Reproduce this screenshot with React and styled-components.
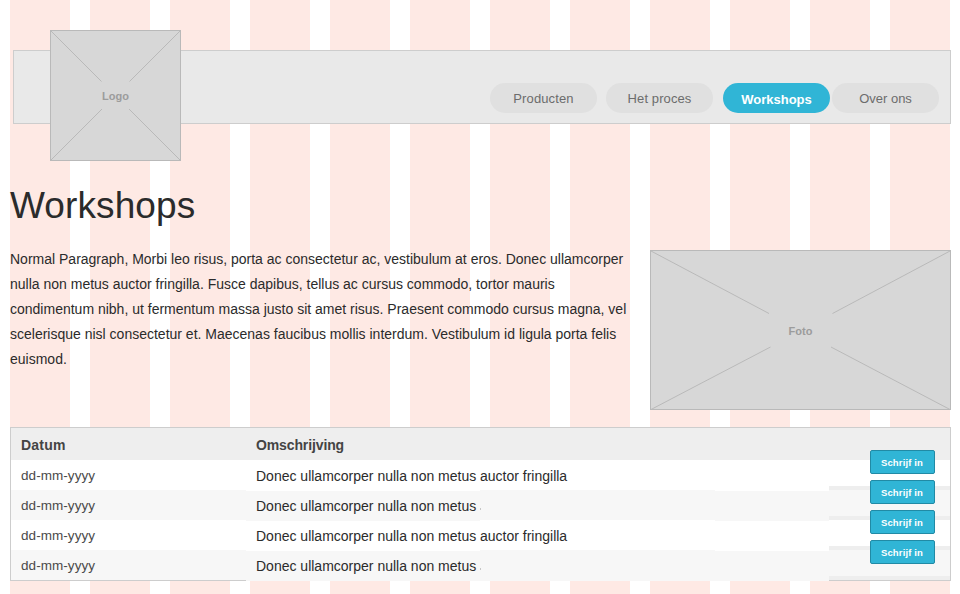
import React from "react";
import styled, { createGlobalStyle } from "styled-components";

const GlobalStyle = createGlobalStyle`
  *, *::before, *::after { box-sizing: border-box; }
  body { margin: 0; background: #fff; }
`;

const Page = styled.div`
  width: 960px;
  height: 594px;
  overflow: hidden;
  padding: 50px 9px 0 10px;
  font-family: "Liberation Sans", Arial, sans-serif;
  color: #2b2b2b;
  background: linear-gradient(90deg, #fee9e4 60px, #fff 60px) 10px 0 / 80px 100%;
`;

const Header = styled.header`
  display: flex;
  justify-content: space-between;
  height: 74px;
  margin-left: 3px;
  padding: 0 11px 0 36px;
  background: #e9e9e9;
  border: 1px solid #cdcdcd;
`;

const PlaceholderBox = styled.div`
  display: grid;
  flex: none;
  width: ${(p) => p.$width}px;
  height: ${(p) => p.$height}px;
  margin-top: ${(p) => p.$top}px;
  background: #d7d7d7;

  > * { grid-area: 1 / 1; }
`;

const Cross = styled.svg`
  display: block;
  stroke: #b9b9b9;
  fill: none;
`;

const PlaceholderLabel = styled.span`
  place-self: center;
  padding-top: 1px;
  font-size: 11px;
  line-height: 14px;
  font-weight: bold;
  letter-spacing: ${(p) => p.$tracking}px;
  color: #9c9c9c;
`;

const Nav = styled.nav`
  display: flex;
  padding-top: 32px;
`;

const Pill = styled.a`
  width: 107px;
  height: 30px;
  margin-left: ${(p) => p.$gap}px;
  border-radius: 15px;
  text-align: center;
  font-size: 13px;
  line-height: ${(p) => (p.$active ? 33 : 31)}px;
  letter-spacing: ${(p) => p.$tracking}px;
  font-weight: ${(p) => (p.$active ? "bold" : "normal")};
  color: ${(p) => (p.$active ? "#fff" : "#6c6c6c")};
  background: ${(p) => (p.$active ? "#30b5d6" : "#e0e0e0")};
`;

const Title = styled.h1`
  margin: 61px 0 0;
  height: 62px;
  font-size: 37px;
  line-height: 42px;
  font-weight: normal;
  letter-spacing: 0.1px;
`;

const Intro = styled.section`
  display: flex;
  justify-content: space-between;
  height: 180px;
`;

const Paragraph = styled.p`
  margin: 0;
  font-size: 14px;
  line-height: 25px;
  white-space: nowrap;
`;

const Line = styled.span`
  display: block;
`;

const Table = styled.section`
  height: 154px;
  border: 1px solid #cdcdcd;
  background: #fff;
`;

const TableHead = styled.div`
  display: grid;
  grid-template-columns: 235px 1fr;
  height: 32px;
  padding-left: 10px;
  background: #eee;
  color: #444;
  font-size: 14px;
  line-height: 34px;
  font-weight: bold;
`;

const HeadCell = styled.span`
  letter-spacing: ${(p) => p.$tracking}px;
`;

const Row = styled.div`
  display: grid;
  grid-template-columns: 235px 234px 235px 114px 1fr;
  grid-template-rows: 30px;
  height: 30px;

  --fill: ${(p) => (p.$shaded ? "#f7f7f7" : "#fff")};
`;

const DateCell = styled.div`
  padding-left: 10px;
  background: var(--fill);
  color: #4a4a4a;
  font-size: 13.5px;
  line-height: 31px;
  letter-spacing: 0.06px;
`;

const TextCell = styled.div`
  height: 30px;
  margin-top: 1px;
  padding-left: 10px;
  background: var(--fill);
  font-size: 14px;
  line-height: 31px;
  white-space: nowrap;
`;

const WideCell = styled.div`
  height: ${(p) => (p.$shaded ? 31 : 30)}px;
  background: var(--fill);
  font-size: 14px;
  line-height: 33px;
`;

const ClippedMark = styled.i`
  display: block;
  width: 1px;
  height: 2px;
  margin-top: 18px;
  background: #c6c6c6;
`;

const SpacerCell = styled(TextCell)`
  padding: 0;
`;

const ActionCell = styled.div`
  height: 30px;
  padding-left: 41px;
  background: var(--fill);
  border-bottom: 4px solid #eee;
`;

const SignUpButton = styled.button`
  display: block;
  width: 65px;
  height: 24px;
  margin: -10px 0 0;
  padding: 0 1px 0 0;
  border: 1px solid #218aa5;
  border-radius: 2px;
  background: #30b5d6;
  color: #fff;
  font-family: inherit;
  font-size: 9.5px;
  font-weight: bold;
  line-height: 23px;
  letter-spacing: 0.14px;
`;

const navItems = [
  { label: "Producten", gap: 0, tracking: 0.12 },
  { label: "Het proces", gap: 9, tracking: 0.1 },
  { label: "Workshops", gap: 10, tracking: 0, active: true },
  { label: "Over ons", gap: 2, tracking: 0 },
];

const introLines = [
  "Normal Paragraph, Morbi leo risus, porta ac consectetur ac, vestibulum at eros. Donec ullamcorper",
  "nulla non metus auctor fringilla. Fusce dapibus, tellus ac cursus commodo, tortor mauris",
  "condimentum nibh, ut fermentum massa justo sit amet risus. Praesent commodo cursus magna, vel",
  "scelerisque nisl consectetur et. Maecenas faucibus mollis interdum. Vestibulum id ligula porta felis",
  "euismod.",
];

const workshops = [
  { shaded: false, rest: "auctor fringilla" },
  { shaded: true, rest: "" },
  { shaded: false, rest: "auctor fringilla" },
  { shaded: true, rest: "" },
];

function Placeholder({ width, height, top, label, tracking, paths }) {
  return (
    <PlaceholderBox $width={width} $height={height} $top={top}>
      <Cross width={width} height={height}>
        <rect x="0.5" y="0.5" width={width - 1} height={height - 1} />
        <path d={paths} />
      </Cross>
      <PlaceholderLabel $tracking={tracking}>{label}</PlaceholderLabel>
    </PlaceholderBox>
  );
}

export default function App() {
  return (
    <>
      <GlobalStyle />
      <Page>
        <Header>
          <Placeholder
            width={131}
            height={131}
            top={-21}
            label="Logo"
            tracking={0}
            paths="M1 1L51.5 51.5M130 1L79.5 51.5M1 130L52 79M130 130L79 79"
          />
          <Nav>
            {navItems.map((item) => (
              <Pill key={item.label} $gap={item.gap} $tracking={item.tracking} $active={item.active}>
                {item.label}
              </Pill>
            ))}
          </Nav>
        </Header>
        <Title>Workshops</Title>
        <Intro>
          <Paragraph>
            {introLines.map((text) => (
              <Line key={text}>{text}</Line>
            ))}
          </Paragraph>
          <Placeholder
            width={301}
            height={160}
            top={3}
            label="Foto"
            tracking={0}
            paths="M1 1L119 63.5M300 1L182.5 63.5M1 159.5L120.5 97M300 159.5L181 97"
          />
        </Intro>
        <Table>
          <TableHead>
            <HeadCell $tracking={0.2}>Datum</HeadCell>
            <HeadCell $tracking={-0.12}>Omschrijving</HeadCell>
          </TableHead>
          {workshops.map((row, i) => (
            <Row key={i} $shaded={row.shaded}>
              <DateCell>dd-mm-yyyy</DateCell>
              <TextCell>Donec ullamcorper nulla non metus</TextCell>
              <WideCell $shaded={row.shaded}>{row.rest || <ClippedMark />}</WideCell>
              <SpacerCell />
              <ActionCell>
                <SignUpButton>Schrijf in</SignUpButton>
              </ActionCell>
            </Row>
          ))}
        </Table>
      </Page>
    </>
  );
}
